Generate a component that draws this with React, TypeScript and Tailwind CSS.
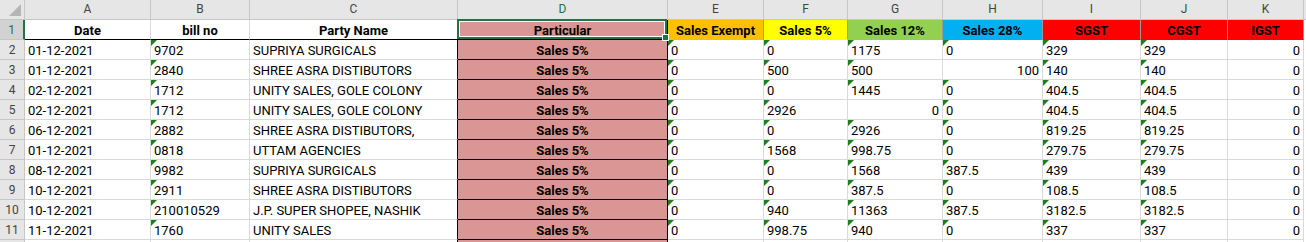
import React from "react"

const columns = ["A", "B", "C", "D", "E", "F", "G", "H", "I", "J", "K"]

type Val = { v: string; right?: boolean }

// text numbers carry Excel's little green triangle, real numbers sit right
const t = (v: string): Val => ({ v })
const n = (v: string): Val => ({ v, right: true })

const rows: { date: string; bill: string; party: string; vals: Val[] }[] = [
    { date: "01-12-2021", bill: "9702", party: "SUPRIYA SURGICALS", vals: [t("0"), t("0"), t("1175"), t("0"), t("329"), t("329"), n("0")] },
    { date: "01-12-2021", bill: "2840", party: "SHREE ASRA DISTIBUTORS", vals: [t("0"), t("500"), t("500"), n("100"), t("140"), t("140"), n("0")] },
    { date: "02-12-2021", bill: "1712", party: "UNITY SALES, GOLE COLONY", vals: [t("0"), t("0"), t("1445"), t("0"), t("404.5"), t("404.5"), n("0")] },
    { date: "02-12-2021", bill: "1712", party: "UNITY SALES, GOLE COLONY", vals: [t("0"), t("2926"), n("0"), t("0"), t("404.5"), t("404.5"), n("0")] },
    { date: "06-12-2021", bill: "2882", party: "SHREE ASRA DISTIBUTORS,", vals: [t("0"), t("0"), t("2926"), t("0"), t("819.25"), t("819.25"), n("0")] },
    { date: "01-12-2021", bill: "0818", party: "UTTAM AGENCIES", vals: [t("0"), t("1568"), t("998.75"), t("0"), t("279.75"), t("279.75"), n("0")] },
    { date: "08-12-2021", bill: "9982", party: "SUPRIYA SURGICALS", vals: [t("0"), t("0"), t("1568"), t("387.5"), t("439"), t("439"), n("0")] },
    { date: "10-12-2021", bill: "2911", party: "SHREE ASRA DISTIBUTORS", vals: [t("0"), t("0"), t("387.5"), t("0"), t("108.5"), t("108.5"), n("0")] },
    { date: "10-12-2021", bill: "210010529", party: "J.P. SUPER SHOPEE, NASHIK", vals: [t("0"), t("940"), t("11363"), t("387.5"), t("3182.5"), t("3182.5"), n("0")] },
    { date: "11-12-2021", bill: "1760", party: "UNITY SALES", vals: [t("0"), t("998.75"), t("940"), t("0"), t("337"), t("337"), n("0")] },
]

const salesHeads = [
    { label: "Sales Exempt", bg: "bg-[#ffc000]" },
    { label: "Sales 5%", bg: "bg-[#ffff00]" },
    { label: "Sales 12%", bg: "bg-[#92d050]" },
    { label: "Sales 28%", bg: "bg-[#00b0f0]" },
    { label: "SGST", bg: "bg-[#ff0000]" },
    { label: "CGST", bg: "bg-[#ff0000]" },
    { label: "IGST", bg: "bg-[#ff0000]" },
]

const cell = "relative h-5 border-r border-b pt-px text-[13px] leading-[19px] whitespace-nowrap overflow-hidden"
const hdr = "h-5 border-r border-b border-[#c6c6c6] bg-[#e6e6e6] text-center text-[12px] leading-[19px] text-[#444]"

function Tri() {
    return <span className="absolute left-0 top-0 h-0 w-0 border-t-[6px] border-r-[6px] border-t-[#1c7f1c] border-r-transparent" />
}

export default function App() {
    return (
        <div className="h-[242px] w-[1306px] overflow-hidden bg-white font-['Roboto',sans-serif] text-black">
            <div className="grid grid-cols-[25px_126px_99px_208px_210px_96px_84px_95px_100px_98px_87px_76px_2px]">
                {/* column letters */}
                <div className={`${hdr} relative`}>
                    <span className="absolute bottom-[3px] right-[3px] h-0 w-0 border-b-[12px] border-l-[12px] border-b-[#b5b5b5] border-l-transparent" />
                </div>
                {columns.map((c) => (
                    <div key={c} className={`${hdr} ${c === "D" ? "bg-[#d2d2d2] text-[#217346]" : ""}`}>
                        {c}
                    </div>
                ))}
                <div className="h-5 border-b border-[#c6c6c6] bg-[#e6e6e6]" />

                {/* row 1 : headings */}
                <div className="h-5 border-b border-r-2 border-b-[#c6c6c6] border-r-[#217346] bg-[#d2d2d2] pt-px text-center text-[12px] leading-[19px] text-[#217346]">1</div>
                <div className={`${cell} border-r-[#d9d9d9] border-b-black text-center font-bold`}>Date</div>
                <div className={`${cell} border-r-[#d9d9d9] border-b-black text-center font-bold`}>bill no</div>
                <div className={`${cell} border-r-black border-b-black text-center font-bold`}>Party Name</div>
                <div className="relative h-5 border-r border-b border-black bg-[#da9694] pt-px text-center text-[13px] font-bold leading-[19px]">
                    Particular
                    <div className="absolute -left-px -top-px bottom-0 right-0 z-10 border-2 border-[#217346]">
                        <div className="h-full w-full border border-white" />
                        <span className="absolute -bottom-[4px] -right-[4px] h-[7px] w-[7px] border border-white bg-[#217346]" />
                    </div>
                </div>
                {salesHeads.map((h) => (
                    <div key={h.label} className={`${cell} ${h.bg} border-r-[#9a9a9a] border-b-transparent text-center font-bold`}>
                        {h.label}
                    </div>
                ))}
                <div className="h-5" />

                {/* data rows */}
                {rows.map((r, i) => (
                    <React.Fragment key={i}>
                        <div className={hdr + " pt-px"}>{i + 2}</div>
                        <div className={`${cell} border-[#d9d9d9] px-[3px]`}>{r.date}</div>
                        <div className={`${cell} border-[#d9d9d9] px-[3px]`}>
                            <Tri />
                            {r.bill}
                        </div>
                        <div className={`${cell} border-r-black border-b-[#d9d9d9] px-[3px]`}>{r.party}</div>
                        <div className={`${cell} border-black bg-[#da9694] text-center font-bold`}>Sales 5%</div>
                        {r.vals.map((v, j) => (
                            <div key={j} className={`${cell} border-[#d9d9d9] px-[3px] ${v.right ? "text-right" : ""}`}>
                                {!v.right && <Tri />}
                                {v.v}
                            </div>
                        ))}
                        <div className="h-5" />
                    </React.Fragment>
                ))}

                {/* sliver of row 12 */}
                <div className="h-[2px] border-r border-[#c6c6c6] bg-[#e6e6e6]" />
                {columns.map((c) => (
                    <div key={c} className={`h-[2px] border-r ${c === "C" || c === "D" ? "border-black" : "border-[#d9d9d9]"} ${c === "D" ? "bg-[#da9694]" : ""}`} />
                ))}
                <div className="h-[2px]" />
            </div>
        </div>
    )
}
